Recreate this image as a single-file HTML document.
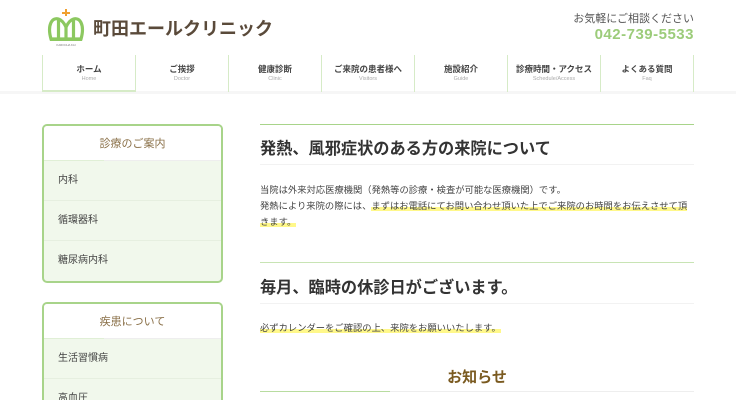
<!DOCTYPE html>
<html><head><meta charset="utf-8"><style>
*{margin:0;padding:0;box-sizing:border-box}
html,body{width:736px;height:400px;overflow:hidden}
body{background:#fff;font-family:"Liberation Sans","Noto Sans CJK JP",sans-serif;color:#444;position:relative}
.abs{position:absolute;white-space:nowrap}
.nav{position:absolute;top:55px;left:42px;width:652px;height:37px;display:flex}
.nav div{flex:1;text-align:center;border-right:1px solid #d6ebc7;padding-top:9px}
.nav div:first-child{border-left:1px solid #d6ebc7;border-bottom:2px solid #d6ebc7}
.nav b{display:block;font-size:8.5px;color:#444;line-height:11px}
.nav span{display:block;font-size:5.5px;color:#aaa;line-height:9px}
.band{position:absolute;top:91px;left:0;width:736px;height:3px;background:#f6f6f6}
.box{position:absolute;left:42px;width:181px;border:2px solid #a8d48a;border-radius:5px;background:#f1f8ec;overflow:hidden}
.box .t{height:35px;background:#fff;text-align:center;line-height:36px;font-size:11px;color:#8a7048;border-bottom:1px solid #eee;position:relative}
.box .t:after{content:"";position:absolute;left:0;bottom:-1px;width:60px;height:1px;background:#e0efd6}
.box .i{height:40px;line-height:40px;padding-left:14px;font-size:10px;color:#444;border-bottom:1px solid #e6efe0}
.gl{position:absolute;left:260px;width:434px;height:1px}
h2{position:absolute;left:260px;font-size:16.2px;font-weight:bold;color:#333;white-space:nowrap}
p{position:absolute;left:260px;font-size:9.3px;line-height:16px;color:#444;white-space:nowrap}
.hl{background:linear-gradient(transparent 60%,#fff88a 60%)}
</style></head><body>
<svg class="abs" style="left:47px;top:8px" width="38" height="40" viewBox="0 0 38 40">
<path d="M18 1h2v3h3v2h-3v2h-2V6h-3V4h3z" fill="#f0a030"/>
<path d="M4 31 C0 17,5 9,11.5 11 C15 12,17 15,19 19 C21 15,23 12,26.5 11 C33 9,38 17,34 31 Z" fill="none" stroke="#8cc860" stroke-width="3.2"/>
<path d="M11.5 12v19M26.5 12v19M19 19v12" stroke="#8cc860" stroke-width="3.2"/>
<rect x="3" y="30" width="32" height="3" fill="#8cc860"/>
<text x="19" y="38" font-size="2.8" fill="#777" text-anchor="middle" font-family="Liberation Sans">KAROCHA KAI</text>
</svg>
<div class="abs" style="left:93px;top:15px;font-size:18px;color:#5a4a3a;font-weight:bold">町田エールクリニック</div>
<div class="abs" style="right:42px;top:10px;font-size:11px;color:#555">お気軽にご相談ください</div>
<div class="abs" style="right:42px;top:26px;font-size:15px;font-weight:bold;color:#9ccc7a;letter-spacing:0.5px">042-739-5533</div>
<div class="band"></div>
<div class="nav">
<div><b>ホーム</b><span>Home</span></div>
<div><b>ご挨拶</b><span>Doctor</span></div>
<div><b>健康診断</b><span>Clinic</span></div>
<div><b>ご来院の患者様へ</b><span>Visitors</span></div>
<div><b>施設紹介</b><span>Guide</span></div>
<div><b>診療時間・アクセス</b><span>Schedule/Access</span></div>
<div><b>よくある質問</b><span>Faq</span></div>
</div>
<div class="box" style="top:124px;height:159px"><div class="t">診療のご案内</div><div class="i">内科</div><div class="i">循環器科</div><div class="i" style="border:0">糖尿病内科</div></div>
<div class="box" style="top:302px;height:98px;border-bottom:0;border-radius:5px 5px 0 0"><div class="t">疾患について</div><div class="i">生活習慣病</div><div class="i">高血圧</div></div>
<div class="gl" style="top:124px;background:#a8d48a"></div>
<h2 style="top:135px">発熱、風邪症状のある方の来院について</h2>
<div class="gl" style="top:164px;background:#f2f2f2"></div>
<p style="top:182px">当院は外来対応医療機関（発熱等の診療・検査が可能な医療機関）です。<br>発熱により来院の際には、<span class="hl">まずはお電話にてお問い合わせ頂いた上でご来院のお時間をお伝えさせて頂</span><br><span class="hl">きます。</span></p>
<div class="gl" style="top:262px;background:#c8e4b4"></div>
<h2 style="top:274px">毎月、臨時の休診日がございます。</h2>
<div class="gl" style="top:303px;background:#f2f2f2"></div>
<p style="top:320px"><span class="hl">必ずカレンダーをご確認の上、来院をお願いいたします。</span></p>
<div class="abs" style="left:260px;width:434px;top:366px;text-align:center;font-size:15px;font-weight:bold;color:#7a5a20">お知らせ</div>
<div class="gl" style="top:391px;background:#eee"></div>
<div class="gl" style="top:391px;width:130px;background:#b8dca0"></div>
</body></html>
